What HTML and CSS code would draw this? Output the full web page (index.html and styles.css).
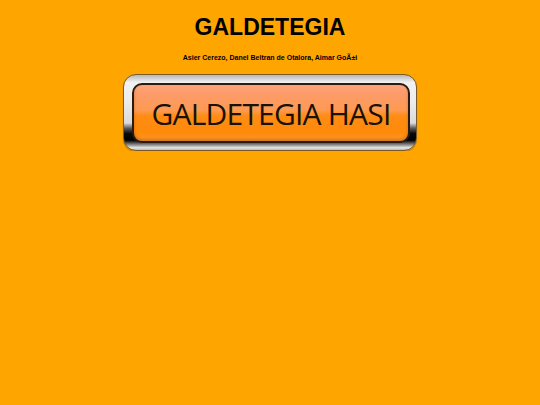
FILE: index.html
```html
<!DOCTYPE html>
<html>
<head>
<meta charset="utf-8">
<link rel="stylesheet" href="styles.css">
</head>
<body>
<div class="page">
  <h1 class="title">GALDETEGIA</h1>
  <p class="authors">Asier Cerezo, Danel Beltran de Otalora, Aimar GoÃ±i</p>
  <div class="btn-wrap">
    <a class="btn-chrome" href="#">
      <span class="btn-face"><span class="btn-label">GALDETEGIA HASI</span></span>
    </a>
  </div>
</div>
</body>
</html>
```
FILE: styles.css
```css
html, body {
  margin: 0;
  padding: 0;
  background: #ffa500;
}
.page {
  display: flex;
  flex-direction: column;
  align-items: center;
  padding-top: 14px;
}
.title {
  margin: 0;
  font-family: "Liberation Sans", Arial, sans-serif;
  font-weight: bold;
  font-size: 23px;
  line-height: 26px;
  color: #000;
}
.authors {
  margin: 14px 0 0 0;
  font-family: "Liberation Sans", Arial, sans-serif;
  font-weight: bold;
  font-size: 7px;
  line-height: 8px;
  color: #000;
}
.btn-wrap {
  margin-top: 12px;
  display: flex;
  justify-content: center;
}
.btn-chrome {
  display: flex;
  box-sizing: border-box;
  width: 294px;
  height: 77px;
  padding: 8px 6px 7px 8px;
  border-radius: 13px;
  border: 1px solid #7a5a26;
  text-decoration: none;
  background: linear-gradient(to bottom,
    #b8b8b8 0%, #f2f2f2 10%, #ececec 35%, #dadada 64%,
    #5a5a5a 71%, #0a0a0a 78%, #000 87%, #8a8a8a 93%, #e8e8e8 97%, #b8b8b8 100%);
  box-shadow: 0 1px 1px rgba(90,60,0,0.4);
}
.btn-face {
  flex: 1;
  display: flex;
  align-items: center;
  justify-content: center;
  border-radius: 10px;
  border: 2px solid #2a1a10;
  background: linear-gradient(to bottom,
    #fda27a 0%, #fd9a66 20%, #fe9a52 45%, #ff8c14 55%, #ff8a0a 85%, #ff9a30 100%);
  box-shadow: inset 0 -2px 3px rgba(120,60,0,0.35);
}
.btn-label {
  font-family: "Open Sans", "Noto Sans", sans-serif;
  font-size: 30px;
  line-height: 1;
  color: #1a1208;
  letter-spacing: -0.8px;
  margin-top: 2px;
}
```
